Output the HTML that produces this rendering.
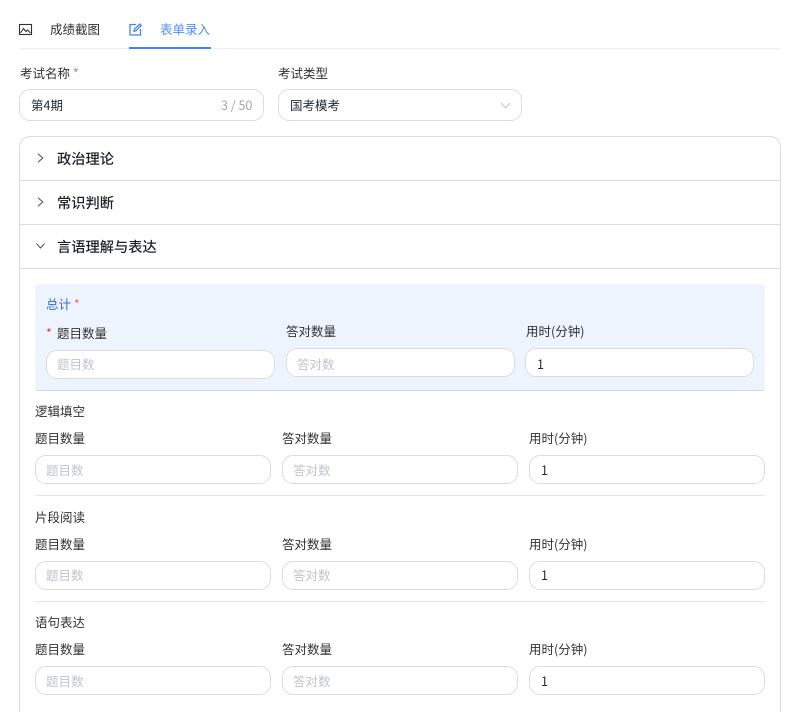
<!DOCTYPE html>
<html lang="zh"><head><meta charset="utf-8">
<style>
html,body{margin:0;padding:0;background:#fff;width:789px;height:712px;overflow:hidden}
body{position:relative;font-family:"Noto Sans CJK SC","Liberation Sans",sans-serif;font-size:12.5px;color:#303133}
.t{position:absolute;white-space:nowrap;line-height:18px;margin-top:0}
.b{position:absolute;box-sizing:border-box;background:#fff;border:1px solid #dadce0;border-radius:11px;height:29px}
.ph{color:#c0c4cc}
.v{color:#1f2937}
.line{position:absolute;height:1px}
.h{font-size:14.25px;font-weight:500;color:#1f2329;line-height:20px}
.r{color:#f56c6c}
svg{position:absolute;overflow:visible}
</style></head><body>

<svg style="left:19px;top:24px" width="13" height="11" viewBox="0 0 13 11" fill="none" stroke="#303133" stroke-width="1.100"><rect x=".5" y=".5" width="12" height="10"/><path d="M1.500 9l3-4.500 2.500 3 1.500-1.500 3 3"/></svg>
<div class="t" style="left:50px;top:20px">成绩截图</div>
<svg style="left:129px;top:23px" width="13" height="13" viewBox="0 0 13 13" fill="none" stroke="#3f83f8" stroke-width="1.300"><path d="M7 1.500H1v10.500h10.500V6"/><path d="M5 8.300l.4-2L10.700 1l1.500 1.500L7 7.800z"/></svg>
<div class="t" style="left:160px;top:20px;color:#4d8dff">表单录入</div>
<div class="line" style="left:19px;top:48px;width:762px;background:#eceef1"></div>
<div class="line" style="left:129px;top:47px;width:82px;height:2px;background:#3f83f8"></div>

<div class="t" style="left:20px;top:64px">考试名称 <span class="r">*</span></div>
<div class="b" style="left:19px;top:89px;width:245px;height:32px"></div>
<div class="t v" style="left:31px;top:96px">第4期</div>
<div class="t" style="left:221px;top:96px;color:#a0a4ab">3 / 50</div>

<div class="t" style="left:278px;top:64px">考试类型</div>
<div class="b" style="left:278px;top:89px;width:244px;height:32px"></div>
<div class="t v" style="left:290px;top:96px">国考模考</div>
<svg style="left:500px;top:102px" width="11" height="7" viewBox="0 0 11 7" fill="none" stroke="#c0c4cc" stroke-width="1"><path d="M1 1l4.500 5L10 1"/></svg>

<div style="position:absolute;box-sizing:border-box;left:19px;top:136px;width:762px;height:600px;border:1px solid #dadce0;border-radius:11px"></div>
<div class="line" style="left:20px;top:180px;width:760px;background:#dadce0"></div>
<div class="line" style="left:20px;top:224px;width:760px;background:#dadce0"></div>
<div class="line" style="left:20px;top:268px;width:760px;background:#dadce0"></div>

<svg style="left:37px;top:153px" width="7" height="10" viewBox="0 0 7 10" fill="none" stroke="#4a4d52" stroke-width="1"><path d="M1 .8L5.800 5 1 9.200"/></svg>
<div class="t h" style="left:57px;top:149px">政治理论</div>
<svg style="left:37px;top:197px" width="7" height="10" viewBox="0 0 7 10" fill="none" stroke="#4a4d52" stroke-width="1"><path d="M1 .8L5.800 5 1 9.200"/></svg>
<div class="t h" style="left:57px;top:193px">常识判断</div>
<svg style="left:36px;top:243px" width="9" height="6" viewBox="0 0 9 6" fill="none" stroke="#4a4d52" stroke-width="1"><path d="M.5 .6l4 4.400L8.500 .6"/></svg>
<div class="t h" style="left:57px;top:237px">言语理解与表达</div>

<div style="position:absolute;box-sizing:border-box;left:35px;top:284px;width:730px;height:107px;background:#eef4fe;border-bottom:1px solid #c6dafa;border-radius:3px"></div>
<div class="t" style="left:46px;top:295px;color:#2f6bdf">总计 <span class="r">*</span></div>
<div class="t" style="left:46px;top:324px;color:#f03d3d">*</div>
<div class="t" style="left:57px;top:324px">题目数量</div>
<div class="t" style="left:286px;top:322px">答对数量</div>
<div class="t" style="left:526px;top:322px">用时(分钟)</div>
<div class="b" style="left:46px;top:350px;width:229px"></div>
<div class="t ph" style="left:57px;top:355px">题目数</div>
<div class="b" style="left:286px;top:348px;width:229px"></div>
<div class="t ph" style="left:297px;top:355px">答对数</div>
<div class="b" style="left:525px;top:348px;width:229px"></div>
<div class="t v" style="left:537px;top:355px">1</div>

<div class="t" style="left:35px;top:402px">逻辑填空</div>
<div class="t" style="left:35px;top:429px">题目数量</div>
<div class="t" style="left:282px;top:429px">答对数量</div>
<div class="t" style="left:529px;top:429px">用时(分钟)</div>
<div class="b" style="left:35px;top:455px;width:236px"></div>
<div class="t ph" style="left:46px;top:461px">题目数</div>
<div class="b" style="left:282px;top:455px;width:236px"></div>
<div class="t ph" style="left:293px;top:461px">答对数</div>
<div class="b" style="left:529px;top:455px;width:236px"></div>
<div class="t v" style="left:541px;top:461px">1</div>
<div class="line" style="left:35px;top:495px;width:730px;background:#e4e7ed"></div>

<div class="t" style="left:35px;top:508px">片段阅读</div>
<div class="t" style="left:35px;top:535px">题目数量</div>
<div class="t" style="left:282px;top:535px">答对数量</div>
<div class="t" style="left:529px;top:535px">用时(分钟)</div>
<div class="b" style="left:35px;top:561px;width:236px"></div>
<div class="t ph" style="left:46px;top:566px">题目数</div>
<div class="b" style="left:282px;top:561px;width:236px"></div>
<div class="t ph" style="left:293px;top:566px">答对数</div>
<div class="b" style="left:529px;top:561px;width:236px"></div>
<div class="t v" style="left:541px;top:566px">1</div>
<div class="line" style="left:35px;top:601px;width:730px;background:#e4e7ed"></div>

<div class="t" style="left:35px;top:613px">语句表达</div>
<div class="t" style="left:35px;top:640px">题目数量</div>
<div class="t" style="left:282px;top:640px">答对数量</div>
<div class="t" style="left:529px;top:640px">用时(分钟)</div>
<div class="b" style="left:35px;top:666px;width:236px"></div>
<div class="t ph" style="left:46px;top:672px">题目数</div>
<div class="b" style="left:282px;top:666px;width:236px"></div>
<div class="t ph" style="left:293px;top:672px">答对数</div>
<div class="b" style="left:529px;top:666px;width:236px"></div>
<div class="t v" style="left:541px;top:672px">1</div>

</body></html>
